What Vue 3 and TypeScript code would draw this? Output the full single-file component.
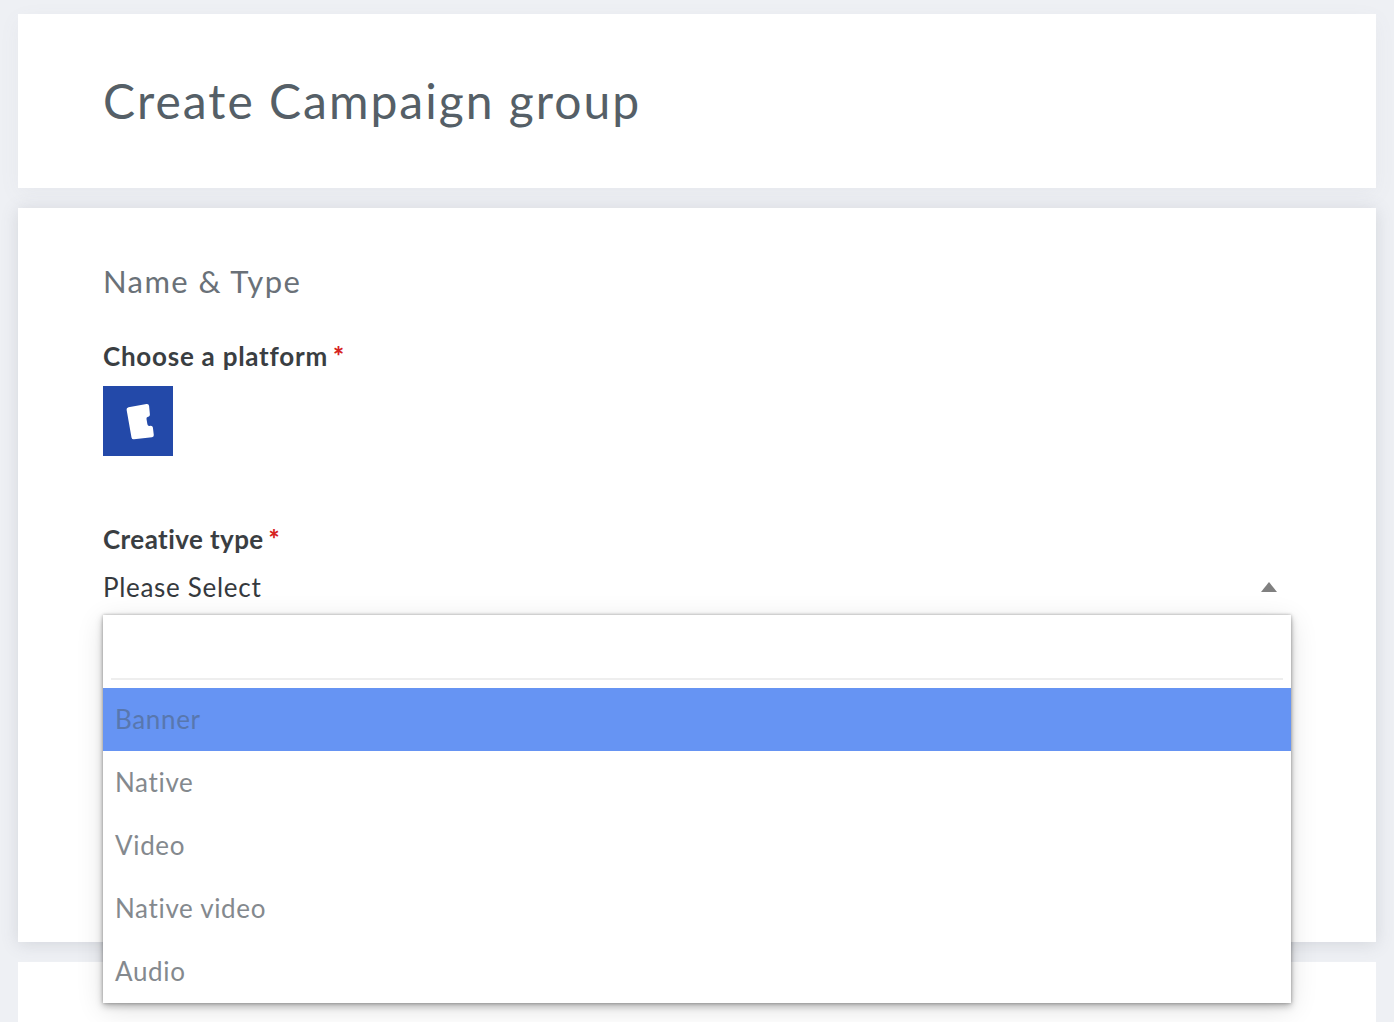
<script setup lang="ts">
const options: string[] = ['Banner', 'Native', 'Video', 'Native video', 'Audio']
</script>

<template>
  <div class="page">
    <header class="card head">
      <h1>Create Campaign group</h1>
    </header>
    <section class="card main">
      <h2>Name &amp; Type</h2>
      <div class="label first">Choose a platform <span class="req">*</span></div>
      <div class="platform">
        <svg width="70" height="70" viewBox="0 0 70 70">
          <rect width="70" height="70" fill="#2349a9" />
          <path d="M25.5 21.200 L43.500 18 Q45.800 17.700 46.100 19.900 L46.900 28.500 Q47 30.400 45.300 30.800 L44.500 31 Q43.200 31.500 43.500 33 L44.400 38.300 Q44.700 39.900 46.200 39.900 L47.800 39.800 Q49.600 39.800 49.900 41.500 L50.800 49 Q51 51 49 51.300 L31 53.300 Q28.900 53.500 28.500 51.400 L23.600 23.800 Q23.300 21.700 25.500 21.200 Z" fill="#fff" />
        </svg>
      </div>
      <div class="label second">Creative type <span class="req">*</span></div>
      <div class="select">
        <div class="value">
          <span>Please Select</span>
          <i class="caret"></i>
        </div>
        <div class="menu">
          <div class="search"><div class="line"></div></div>
          <div
            v-for="(o, i) in options"
            :key="o"
            class="opt"
            :class="{ active: i === 0 }"
          >{{ o }}</div>
        </div>
      </div>
    </section>
    <section class="card tail"></section>
  </div>
</template>

<style>
html, body { margin: 0; background: #eef0f4; }
</style>

<style scoped>
.page {
  height: 1022px;
  overflow: hidden;
  box-sizing: border-box;
  padding: 14px 18px 0;
  display: flex;
  flex-direction: column;
  gap: 20px;
  background: #eef0f4;
  font-family: Lato, "Open Sans", sans-serif;
}
.card {
  background: #fff;
  flex: none;
  box-sizing: border-box;
  padding-left: 85px;
  padding-right: 85px;
}
.head { height: 174px; box-shadow: 0 6px 20px rgba(120, 125, 140, 0.06); }
.main {
  height: 734px;
  padding-top: 55px;
  box-shadow: 0 2px 16px rgba(90, 95, 110, 0.18);
}
.tail { height: 80px; }
h1 {
  margin: 0;
  padding-top: 57px;
  font-size: 48px;
  line-height: 60px;
  font-weight: 400;
  color: #555f67;
  letter-spacing: 2px;
}
h2 {
  margin: 0;
  font-size: 31px;
  line-height: 36px;
  font-weight: 400;
  color: #6a7178;
  letter-spacing: 1.4px;
}
.label {
  font-size: 26px;
  line-height: 32px;
  font-weight: 700;
  color: #3a3e42;
  letter-spacing: 0.75px;
}
.req { color: #d6231f; font-weight: 900; margin-left: -2px; }
.first { margin-top: 41px; }
.platform { margin-top: 14px; height: 70px; line-height: 0; }
.second { margin-top: 67px; letter-spacing: 0.42px; }
.select { position: relative; margin-top: 11px; }
.value {
  height: 42px;
  display: flex;
  justify-content: space-between;
  align-items: center;
  font-size: 26px;
  color: #35393d;
  letter-spacing: 0.7px;
}
.caret {
  width: 0;
  height: 0;
  margin-right: 14px;
  border-left: 8px solid transparent;
  border-right: 8px solid transparent;
  border-bottom: 10px solid #808080;
}
.menu {
  position: absolute;
  left: 0;
  right: 0;
  top: 49px;
  background: #fff;
  box-shadow: 0 0 3px rgba(0, 0, 0, 0.28), 0 3px 7px rgba(0, 0, 0, 0.28), 0 6px 26px rgba(0, 0, 0, 0.12);
}
.search {
  height: 73px;
  padding: 0 8px;
  position: relative;
}
.line {
  position: absolute;
  left: 8px;
  right: 8px;
  bottom: 8px;
  height: 2px;
  background: #eeeeee;
}
.opt {
  height: 63px;
  line-height: 63px;
  padding-left: 12px;
  font-size: 26px;
  color: #84898e;
  letter-spacing: 0.65px;
}
.opt.active { background: #6694f3; color: #5877ae; }
</style>
